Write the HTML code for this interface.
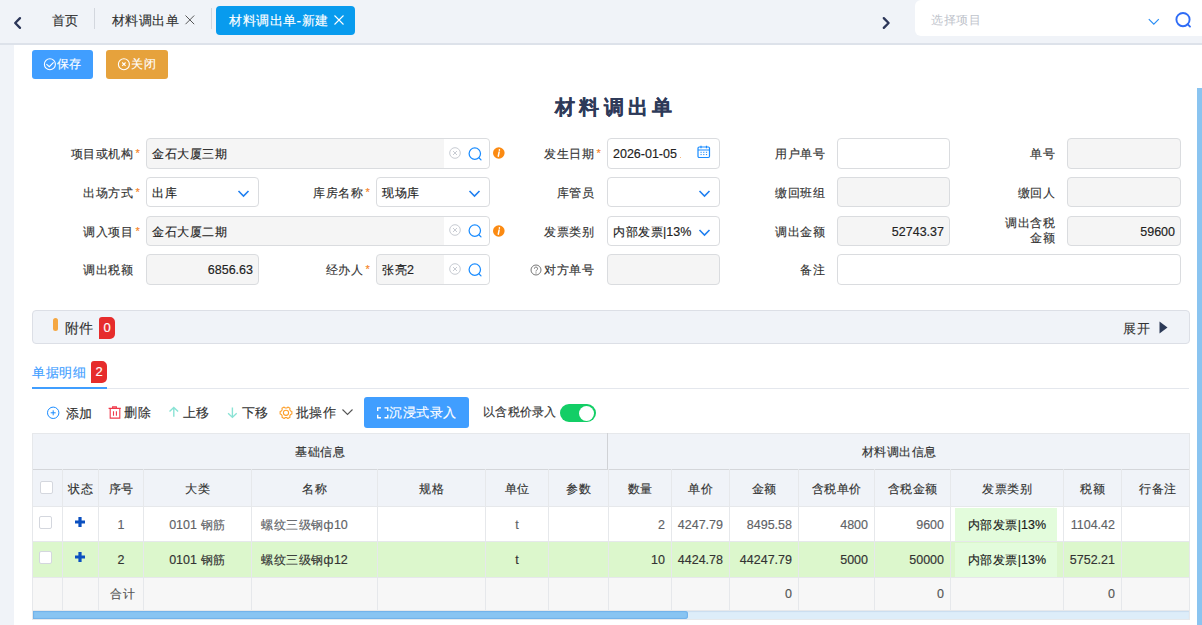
<!DOCTYPE html><html><head><meta charset="utf-8"><style>
*{box-sizing:border-box;margin:0;padding:0}
html,body{width:1202px;height:625px;overflow:hidden}
body{position:relative;background:#f0f3f8;font-family:"Liberation Sans",sans-serif;font-size:13px;color:#333;-webkit-text-stroke-width:.15px}
.a{position:absolute;white-space:nowrap}
svg{position:absolute;overflow:visible}
.c12{font-size:12px;letter-spacing:.5px}
.n{font-size:12.5px;letter-spacing:0}
.lbl{position:absolute;text-align:right;color:#333;padding-top:1px;white-space:nowrap;font-size:12px;letter-spacing:.5px}
.req{position:absolute;color:#f5831f;font-size:11px}
.inp{position:absolute;border:1px solid #dadcdf;border-radius:4px;background:#fff;padding-left:5px;padding-top:1px;color:#222;white-space:nowrap;overflow:hidden;font-size:12px;letter-spacing:.5px}
.gray{background:#f5f5f5}
.r{text-align:right;padding-right:5px}
.cell{position:absolute;text-align:center;white-space:nowrap;color:#333;font-size:12px;letter-spacing:.5px;text-indent:1px}
.vl{position:absolute;width:1px;background:#e6e8eb}
.hl{position:absolute;height:1px;background:#e6e8eb}
</style></head><body>
<div class="a" style="left:0;top:0;width:1202px;height:43px;background:#f0f3f8"></div>
<div class="a" style="left:0;top:43px;width:1202px;height:2px;background:#dde2ea"></div>
<div class="a" style="left:14px;top:45px;width:1188px;height:580px;background:#fff"></div>
<div class="a" style="left:1197px;top:88px;width:5px;height:537px;background:#8ac4f0"></div>
<svg style="left:0;top:0" width="30" height="44"><path d="M20 18.1 L15.2 23 L20 27.9" fill="none" stroke="#2c3659" stroke-width="2.3" stroke-linecap="round" stroke-linejoin="round"/></svg>
<div class="a" style="left:52px;top:9px;line-height:24px;font-size:13px;color:#333">首页</div>
<div class="a" style="left:94px;top:8px;width:1px;height:21px;background:#d3d7de"></div>
<div class="a" style="left:112px;top:9px;line-height:24px;font-size:13px;letter-spacing:.4px;color:#333">材料调出单</div>
<svg style="left:185px;top:15px" width="12" height="12"><path d="M0.5 0.5L9.2 9.2M9.2 0.5L0.5 9.2" stroke="#444" stroke-width="0.9"/></svg>
<div class="a" style="left:211px;top:8px;width:1px;height:21px;background:#d3d7de"></div>
<div class="a" style="left:216px;top:6px;width:139px;height:29px;background:#089bee;border-radius:4px"></div>
<div class="a" style="left:229px;top:9px;line-height:24px;font-size:13px;letter-spacing:.5px;color:#fff">材料调出单<span style="font-size:13.5px">-</span>新建</div>
<svg style="left:334px;top:15px" width="12" height="12"><path d="M0.5 0.5L9.5 9.5M9.5 0.5L0.5 9.5" stroke="#fff" stroke-width="1.1"/></svg>
<svg style="left:876px;top:0" width="20" height="44"><path d="M7.8 18.1 L12.6 23 L7.8 27.9" fill="none" stroke="#2c3659" stroke-width="2.3" stroke-linecap="round" stroke-linejoin="round"/></svg>
<div class="a" style="left:915px;top:0;width:287px;height:36px;background:#fff;border-radius:6px 0 0 6px"></div>
<div class="a c12" style="left:931px;top:8px;line-height:24px;color:#c0c4cc;-webkit-text-stroke-width:0">选择项目</div>
<svg style="left:1146px;top:16px" width="16" height="10"><path d="M2.8 3.2L7.8 8.2L12.8 3.2" fill="none" stroke="#2b8ef5" stroke-width="1.2"/></svg>
<svg style="left:1172px;top:10px" width="22" height="22"><circle cx="11" cy="9.6" r="6.6" fill="none" stroke="#2f6cf6" stroke-width="1.9"/><path d="M15.6 14.2L18 16.6" stroke="#2f6cf6" stroke-width="1.9" stroke-linecap="round"/></svg>
<div class="a" style="left:32px;top:50px;width:61px;height:29px;border-radius:3px;background:#409eff"></div>
<svg style="left:43px;top:58px" width="14" height="14"><circle cx="6.9" cy="6.2" r="5.5" fill="none" stroke="#fff" stroke-width="1.1"/><path d="M3.4 6.2L6.3 8.7L10.6 4.4" fill="none" stroke="#fff" stroke-width="1.1"/></svg>
<div class="a" style="left:57px;top:52px;line-height:24px;font-size:12px;letter-spacing:0.3px;color:#fff">保存</div>
<div class="a" style="left:106px;top:50px;width:62px;height:29px;border-radius:3px;background:#e6a23c"></div>
<svg style="left:117px;top:58px" width="14" height="14"><circle cx="6.9" cy="6.2" r="5.5" fill="none" stroke="#fff" stroke-width="1.1"/><path d="M5.2 4.5L8.6 7.9M8.6 4.5L5.2 7.9" fill="none" stroke="#fff" stroke-width="1.1"/></svg>
<div class="a" style="left:131px;top:52px;line-height:24px;font-size:12px;letter-spacing:1.2px;color:#fff">关闭</div>
<div class="a" style="left:555px;top:92px;font-size:20px;font-weight:bold;letter-spacing:4.3px;color:#2e3a59;line-height:30px">材料调出单</div>
<div class="lbl" style="left:-7px;width:140px;top:138px;height:31px;line-height:31px">项目或机构</div>
<div class="req" style="left:135.5px;top:138px;line-height:31px">*</div>
<div class="inp gray" style="left:146px;top:138px;width:344px;height:31px;line-height:29px">金石大厦三期</div>
<div class="a" style="left:444px;top:139px;width:45px;height:29px;background:#fff;border-radius:0 4px 4px 0"></div>
<svg style="left:449px;top:146.5px" width="14" height="14"><circle cx="6" cy="6" r="5.3" fill="none" stroke="#c8ccd3" stroke-width="1"/><path d="M4 4L8 8M8 4L4 8" stroke="#c8ccd3" stroke-width="1"/></svg>
<svg style="left:467px;top:146.5px" width="16" height="16"><circle cx="7.8" cy="6.6" r="5.7" fill="none" stroke="#1a8cff" stroke-width="1.25"/><path d="M11.9 10.8L14 12.9" stroke="#1a8cff" stroke-width="1.25" stroke-linecap="round"/></svg>
<svg style="left:492px;top:147.0px" width="14" height="14"><circle cx="6.8" cy="6" r="5.8" fill="#fb8a12"/><path d="M7.4 2.8v0.5M7.1 5.1L6.3 9.2" stroke="#fff" stroke-width="1.5" stroke-linecap="round"/></svg>
<div class="lbl" style="left:454px;width:140px;top:138px;height:31px;line-height:31px">发生日期</div>
<div class="req" style="left:596.5px;top:138px;line-height:31px">*</div>
<div class="inp " style="left:607px;top:138px;width:113px;height:31px;line-height:29px"><span class="n">2026-01-05</span></div>
<svg style="left:697px;top:145px" width="14" height="14"><rect x="1" y="2" width="11.5" height="10.5" rx="1.2" fill="none" stroke="#1a8cff" stroke-width="1.2"/><path d="M1 5H12.5M4 0.8v2.4M9.5 0.8v2.4" stroke="#1a8cff" stroke-width="1.2"/><path d="M3.5 7.3h1.2M6.2 7.3h1.2M8.9 7.3h1.2M3.5 9.6h1.2M6.2 9.6h1.2M8.9 9.6h1.2" stroke="#1a8cff" stroke-width="1"/></svg>
<div class="a" style="left:680px;top:156.5px;width:1.3px;height:1.5px;background:#f7b37a"></div>
<div class="lbl" style="left:685px;width:140px;top:138px;height:31px;line-height:31px">用户单号</div>
<div class="inp " style="left:837px;top:138px;width:113px;height:31px;line-height:29px"></div>
<div class="lbl" style="left:915px;width:140px;top:138px;height:31px;line-height:31px">单号</div>
<div class="inp gray" style="left:1067px;top:138px;width:114px;height:31px;line-height:29px"></div>
<div class="lbl" style="left:-7px;width:140px;top:177px;height:30px;line-height:30px">出场方式</div>
<div class="req" style="left:135.5px;top:177px;line-height:30px">*</div>
<div class="inp " style="left:146px;top:177px;width:113px;height:30px;line-height:28px">出库</div>
<svg style="left:237px;top:189.0px" width="14" height="10"><path d="M1.5 2L6.5 7L11.5 2" fill="none" stroke="#1f7ff0" stroke-width="1.6"/></svg>
<div class="lbl" style="left:223px;width:140px;top:177px;height:30px;line-height:30px">库房名称</div>
<div class="req" style="left:365.5px;top:177px;line-height:30px">*</div>
<div class="inp " style="left:376px;top:177px;width:114px;height:30px;line-height:28px">现场库</div>
<svg style="left:468px;top:189.0px" width="14" height="10"><path d="M1.5 2L6.5 7L11.5 2" fill="none" stroke="#1f7ff0" stroke-width="1.6"/></svg>
<div class="lbl" style="left:454px;width:140px;top:177px;height:30px;line-height:30px">库管员</div>
<div class="inp " style="left:607px;top:177px;width:113px;height:30px;line-height:28px"></div>
<svg style="left:698px;top:189.0px" width="14" height="10"><path d="M1.5 2L6.5 7L11.5 2" fill="none" stroke="#1f7ff0" stroke-width="1.6"/></svg>
<div class="lbl" style="left:685px;width:140px;top:177px;height:30px;line-height:30px">缴回班组</div>
<div class="inp gray" style="left:837px;top:177px;width:113px;height:30px;line-height:28px"></div>
<div class="lbl" style="left:915px;width:140px;top:177px;height:30px;line-height:30px">缴回人</div>
<div class="inp gray" style="left:1067px;top:177px;width:114px;height:30px;line-height:28px"></div>
<div class="lbl" style="left:-7px;width:140px;top:216px;height:30px;line-height:30px">调入项目</div>
<div class="req" style="left:135.5px;top:216px;line-height:30px">*</div>
<div class="inp gray" style="left:146px;top:216px;width:344px;height:30px;line-height:28px">金石大厦二期</div>
<div class="a" style="left:444px;top:217px;width:45px;height:28px;background:#fff;border-radius:0 4px 4px 0"></div>
<svg style="left:449px;top:224.0px" width="14" height="14"><circle cx="6" cy="6" r="5.3" fill="none" stroke="#c8ccd3" stroke-width="1"/><path d="M4 4L8 8M8 4L4 8" stroke="#c8ccd3" stroke-width="1"/></svg>
<svg style="left:467px;top:224.0px" width="16" height="16"><circle cx="7.8" cy="6.6" r="5.7" fill="none" stroke="#1a8cff" stroke-width="1.25"/><path d="M11.9 10.8L14 12.9" stroke="#1a8cff" stroke-width="1.25" stroke-linecap="round"/></svg>
<svg style="left:492px;top:224.5px" width="14" height="14"><circle cx="6.8" cy="6" r="5.8" fill="#fb8a12"/><path d="M7.4 2.8v0.5M7.1 5.1L6.3 9.2" stroke="#fff" stroke-width="1.5" stroke-linecap="round"/></svg>
<div class="lbl" style="left:454px;width:140px;top:216px;height:30px;line-height:30px">发票类别</div>
<div class="inp " style="left:607px;top:216px;width:113px;height:30px;line-height:28px">内部发票<span class="n">|13%</span></div>
<svg style="left:698px;top:228.0px" width="14" height="10"><path d="M1.5 2L6.5 7L11.5 2" fill="none" stroke="#1f7ff0" stroke-width="1.6"/></svg>
<div class="lbl" style="left:685px;width:140px;top:216px;height:30px;line-height:30px">调出金额</div>
<div class="inp gray r" style="left:837px;top:216px;width:113px;height:30px;line-height:28px"><span class="n">52743.37</span></div>
<div class="lbl" style="left:915px;width:140px;top:214.5px;line-height:15px;white-space:normal">调出含税<br>金额</div>
<div class="inp gray r" style="left:1067px;top:216px;width:114px;height:30px;line-height:28px"><span class="n">59600</span></div>
<div class="lbl" style="left:-7px;width:140px;top:254px;height:31px;line-height:31px">调出税额</div>
<div class="inp gray r" style="left:146px;top:254px;width:113px;height:31px;line-height:29px"><span class="n">6856.63</span></div>
<div class="lbl" style="left:223px;width:140px;top:254px;height:31px;line-height:31px">经办人</div>
<div class="req" style="left:365.5px;top:254px;line-height:31px">*</div>
<div class="inp gray" style="left:376px;top:254px;width:114px;height:31px;line-height:29px">张亮<span class="n">2</span></div>
<div class="a" style="left:444px;top:255px;width:45px;height:29px;background:#fff;border-radius:0 4px 4px 0"></div>
<svg style="left:449px;top:262.5px" width="14" height="14"><circle cx="6" cy="6" r="5.3" fill="none" stroke="#c8ccd3" stroke-width="1"/><path d="M4 4L8 8M8 4L4 8" stroke="#c8ccd3" stroke-width="1"/></svg>
<svg style="left:467px;top:262.5px" width="16" height="16"><circle cx="7.8" cy="6.6" r="5.7" fill="none" stroke="#1a8cff" stroke-width="1.25"/><path d="M11.9 10.8L14 12.9" stroke="#1a8cff" stroke-width="1.25" stroke-linecap="round"/></svg>
<div class="lbl" style="left:454px;width:140px;top:254px;height:31px;line-height:31px">对方单号</div>
<svg style="left:530px;top:264px" width="13" height="13"><circle cx="6" cy="6" r="5" fill="none" stroke="#777" stroke-width="1"/><path d="M4.4 4.7a1.6 1.6 0 1 1 2.3 1.4c-.5.3-.7.6-.7 1.1v.3" fill="none" stroke="#777" stroke-width="1"/><circle cx="6" cy="8.9" r=".6" fill="#777"/></svg>
<div class="inp gray" style="left:607px;top:254px;width:113px;height:31px;line-height:29px"></div>
<div class="lbl" style="left:685px;width:140px;top:254px;height:31px;line-height:31px">备注</div>
<div class="inp " style="left:837px;top:254px;width:344px;height:31px;line-height:29px"></div>
<div class="a" style="left:32px;top:310px;width:1158px;height:34px;background:#f0f3f8;border:1px solid #dcdfe6;border-radius:4px"></div>
<div class="a" style="left:53px;top:318px;width:5px;height:13px;background:#f5a742;border-radius:3px"></div>
<div class="a" style="left:65px;top:316px;font-size:14px;line-height:24px;color:#333">附件</div>
<div class="a" style="left:99px;top:317px;width:16px;height:22px;background:#e62c2c;border-radius:3px 5px 5px 0;color:#fff;font-size:13px;line-height:22px;text-align:center">0</div>
<div class="a" style="left:1123px;top:317px;font-size:13px;letter-spacing:.6px;line-height:24px;color:#333">展开</div>
<svg style="left:1159px;top:321px" width="10" height="14"><path d="M0.5 0.5L8.5 6.5L0.5 12.5Z" fill="#2c3a57"/></svg>
<div class="a" style="left:32px;top:388px;width:1157px;height:1px;background:#e4e7ed"></div>
<div class="a" style="left:32px;top:387px;width:75px;height:2px;background:#409eff"></div>
<div class="a" style="left:32px;top:361px;font-size:13px;letter-spacing:.6px;line-height:24px;color:#409eff">单据明细</div>
<div class="a" style="left:91px;top:361px;width:16px;height:22px;background:#e62c2c;border-radius:3px 5px 5px 0;color:#fff;font-size:13px;line-height:22px;text-align:center">2</div>
<svg style="left:46px;top:406px" width="14" height="14"><circle cx="7.2" cy="6.8" r="5.7" fill="none" stroke="#1a8cff" stroke-width="1"/><path d="M7.2 4.3v5M4.7 6.8h5" stroke="#1a8cff" stroke-width="1"/></svg>
<div class="a" style="left:66px;top:401.5px;line-height:24px;color:#333">添加</div>
<svg style="left:108px;top:405px" width="14" height="15"><path d="M0.6 3.4H12.8M4.6 3.4V1.9H8.4V3.4" fill="none" stroke="#f0384a" stroke-width="1.1"/><path d="M2.2 3.4V13.1H11.8V3.4" fill="none" stroke="#f0384a" stroke-width="1.1"/><path d="M5.5 6.2V10.8M8.4 6.2V10.8" stroke="#f0384a" stroke-width="1.1"/></svg>
<div class="a" style="left:124px;top:401px;line-height:24px;letter-spacing:.5px;color:#333">删除</div>
<svg style="left:168px;top:405px" width="12" height="15"><path d="M5.8 2.6V11.8M1.5 6.6L5.8 2.5L10.1 6.6" fill="none" stroke="#8ae3d5" stroke-width="1.4"/></svg>
<div class="a" style="left:183px;top:401px;line-height:24px;color:#333">上移</div>
<svg style="left:226px;top:405px" width="12" height="15"><path d="M6.4 2.6V12.2M2.1 8.3L6.4 12.4L10.7 8.3" fill="none" stroke="#8ae3d5" stroke-width="1.4"/></svg>
<div class="a" style="left:242px;top:401px;line-height:24px;color:#333">下移</div>
<svg style="left:279px;top:406px" width="14" height="14"><polygon points="11.57,5.04 12.87,5.55 12.87,8.05 11.57,8.56 10.81,9.88 11.01,11.26 8.85,12.51 7.77,11.64 6.23,11.64 5.15,12.51 2.99,11.26 3.19,9.88 2.43,8.56 1.13,8.05 1.13,5.55 2.43,5.04 3.19,3.72 2.99,2.34 5.15,1.09 6.23,1.96 7.77,1.96 8.85,1.09 11.01,2.34 10.81,3.72" fill="none" stroke="#fd9f2a" stroke-width="1.1" stroke-linejoin="round"/><circle cx="7" cy="6.8" r="2.6" fill="none" stroke="#fd9f2a" stroke-width="1.1"/></svg>
<div class="a" style="left:296px;top:401px;line-height:24px;letter-spacing:.4px;color:#333">批操作</div>
<svg style="left:341px;top:407px" width="14" height="10"><path d="M1.5 2.5L6.5 7.5L11.5 2.5" fill="none" stroke="#555" stroke-width="1.1"/></svg>
<div class="a" style="left:364px;top:397px;width:105px;height:31px;background:#409eff;border-radius:3px"></div>
<svg style="left:375px;top:405px" width="16" height="16"><path d="M2.7 6V2.9H6M9.5 2.9H12.8V6M12.8 9.7V12.8H9.5M6 12.8H2.7V9.7" fill="none" stroke="#fff" stroke-width="1.4"/></svg>
<div class="a" style="left:389px;top:401px;line-height:24px;font-size:13px;letter-spacing:.6px;color:#fff">沉浸式录入</div>
<div class="a" style="left:483px;top:399.5px;line-height:24px;font-size:12px;letter-spacing:.25px;color:#333">以含税价录入</div>
<div class="a" style="left:560px;top:404px;width:36px;height:18px;background:#13ce66;border-radius:9px"></div>
<div class="a" style="left:579.2px;top:405.5px;width:15px;height:15px;background:#fff;border-radius:50%"></div>
<div class="a" style="left:32px;top:433px;width:1157px;height:73px;background:#f0f3f8"></div>
<div class="a" style="left:32px;top:541px;width:1157px;height:36px;background:#dcf7cc"></div>
<div class="a" style="left:32px;top:577px;width:1157px;height:33px;background:#f7f7f7"></div>
<div class="a" style="left:955px;top:508px;width:102px;height:33px;background:#e3fcdc"></div>
<div class="a" style="left:955px;top:543px;width:102px;height:34px;background:#e3fcdc"></div>
<div class="hl" style="left:32px;top:433px;width:1157px;background:#e6e8eb"></div>
<div class="hl" style="left:32px;top:469px;width:1157px;background:#d4d6da"></div>
<div class="hl" style="left:32px;top:506px;width:1157px;background:#e6e8eb"></div>
<div class="hl" style="left:32px;top:541px;width:1157px;background:#e6e8eb"></div>
<div class="hl" style="left:32px;top:577px;width:1157px;background:#e6e8eb"></div>
<div class="hl" style="left:32px;top:610px;width:1157px;background:#e6e8eb"></div>
<div class="vl" style="left:32px;top:433px;height:187px"></div>
<div class="vl" style="left:1189px;top:433px;height:187px"></div>
<div class="hl" style="left:32px;top:619px;width:1158px"></div>
<div class="vl" style="left:607px;top:433px;height:36px;background:#d0d2d6"></div>
<div class="vl" style="left:62px;top:469px;height:141px"></div>
<div class="vl" style="left:98px;top:469px;height:141px"></div>
<div class="vl" style="left:143px;top:469px;height:141px"></div>
<div class="vl" style="left:251px;top:469px;height:141px"></div>
<div class="vl" style="left:377px;top:469px;height:141px"></div>
<div class="vl" style="left:485px;top:469px;height:141px"></div>
<div class="vl" style="left:548px;top:469px;height:141px"></div>
<div class="vl" style="left:608px;top:469px;height:141px"></div>
<div class="vl" style="left:671px;top:469px;height:141px"></div>
<div class="vl" style="left:729px;top:469px;height:141px"></div>
<div class="vl" style="left:798px;top:469px;height:141px"></div>
<div class="vl" style="left:874px;top:469px;height:141px"></div>
<div class="vl" style="left:950px;top:469px;height:141px"></div>
<div class="vl" style="left:1063px;top:469px;height:141px"></div>
<div class="vl" style="left:1121px;top:469px;height:141px"></div>
<div class="cell" style="left:32px;width:575px;top:434px;line-height:36px">基础信息</div>
<div class="cell" style="left:608px;width:581px;top:434px;line-height:36px">材料调出信息</div>
<div class="cell" style="left:62px;width:36px;top:471px;line-height:37px">状态</div>
<div class="cell" style="left:98px;width:45px;top:471px;line-height:37px">序号</div>
<div class="cell" style="left:143px;width:108px;top:471px;line-height:37px">大类</div>
<div class="cell" style="left:251px;width:126px;top:471px;line-height:37px">名称</div>
<div class="cell" style="left:377px;width:108px;top:471px;line-height:37px">规格</div>
<div class="cell" style="left:485px;width:63px;top:471px;line-height:37px">单位</div>
<div class="cell" style="left:548px;width:60px;top:471px;line-height:37px">参数</div>
<div class="cell" style="left:608px;width:63px;top:471px;line-height:37px">数量</div>
<div class="cell" style="left:671px;width:58px;top:471px;line-height:37px">单价</div>
<div class="cell" style="left:729px;width:69px;top:471px;line-height:37px">金额</div>
<div class="cell" style="left:798px;width:76px;top:471px;line-height:37px">含税单价</div>
<div class="cell" style="left:874px;width:76px;top:471px;line-height:37px">含税金额</div>
<div class="cell" style="left:950px;width:113px;top:471px;line-height:37px">发票类别</div>
<div class="cell" style="left:1063px;width:58px;top:471px;line-height:37px">税额</div>
<div class="cell" style="left:1121px;width:73px;top:471px;line-height:37px">行备注</div>
<div class="a" style="left:40px;top:481px;width:13px;height:13px;background:#fff;border:1px solid #d4d7de;border-radius:2px"></div>
<div class="a" style="left:39px;top:516px;width:13px;height:13px;background:#fff;border:1px solid #d4d7de;border-radius:2px"></div>
<svg style="left:74px;top:516px" width="12" height="12"><path d="M6 1V11M1 6H11" stroke="#0b50c0" stroke-width="3.2"/></svg>
<div class="cell" style="left:98px;width:45px;top:508px;line-height:35px;color:#606266"><span class="n">1</span></div>
<div class="cell" style="left:143px;width:108px;top:508px;line-height:35px;color:#606266"><span class="n">0101</span> 钢筋</div>
<div class="cell" style="left:260px;top:508px;line-height:35px;text-align:left;color:#606266">螺纹三级钢ф<span class="n">10</span></div>
<div class="cell" style="left:485px;width:63px;top:508px;line-height:35px;color:#606266"><span class="n">t</span></div>
<div class="cell" style="left:608px;width:57px;top:508px;line-height:35px;text-align:right;color:#606266"><span class="n">2</span></div>
<div class="cell" style="left:671px;width:52px;top:508px;line-height:35px;text-align:right;color:#606266"><span class="n">4247.79</span></div>
<div class="cell" style="left:729px;width:63px;top:508px;line-height:35px;text-align:right;color:#606266"><span class="n">8495.58</span></div>
<div class="cell" style="left:798px;width:70px;top:508px;line-height:35px;text-align:right;color:#606266"><span class="n">4800</span></div>
<div class="cell" style="left:874px;width:70px;top:508px;line-height:35px;text-align:right;color:#606266"><span class="n">9600</span></div>
<div class="cell" style="left:950px;width:113px;top:508px;line-height:35px;color:#1a1a1a">内部发票<span class="n">|13%</span></div>
<div class="cell" style="left:1063px;width:52px;top:508px;line-height:35px;text-align:right;color:#606266"><span class="n">1104.42</span></div>
<div class="a" style="left:39px;top:551px;width:13px;height:13px;background:#fff;border:1px solid #d4d7de;border-radius:2px"></div>
<svg style="left:74px;top:551px" width="12" height="12"><path d="M6 1V11M1 6H11" stroke="#0b50c0" stroke-width="3.2"/></svg>
<div class="cell" style="left:98px;width:45px;top:542px;line-height:36px;color:#333"><span class="n">2</span></div>
<div class="cell" style="left:143px;width:108px;top:542px;line-height:36px;color:#333"><span class="n">0101</span> 钢筋</div>
<div class="cell" style="left:260px;top:542px;line-height:36px;text-align:left;color:#333">螺纹三级钢ф<span class="n">12</span></div>
<div class="cell" style="left:485px;width:63px;top:542px;line-height:36px;color:#333"><span class="n">t</span></div>
<div class="cell" style="left:608px;width:57px;top:542px;line-height:36px;text-align:right;color:#333"><span class="n">10</span></div>
<div class="cell" style="left:671px;width:52px;top:542px;line-height:36px;text-align:right;color:#333"><span class="n">4424.78</span></div>
<div class="cell" style="left:729px;width:63px;top:542px;line-height:36px;text-align:right;color:#333"><span class="n">44247.79</span></div>
<div class="cell" style="left:798px;width:70px;top:542px;line-height:36px;text-align:right;color:#333"><span class="n">5000</span></div>
<div class="cell" style="left:874px;width:70px;top:542px;line-height:36px;text-align:right;color:#333"><span class="n">50000</span></div>
<div class="cell" style="left:950px;width:113px;top:542px;line-height:36px;color:#1a1a1a">内部发票<span class="n">|13%</span></div>
<div class="cell" style="left:1063px;width:52px;top:542px;line-height:36px;text-align:right;color:#333"><span class="n">5752.21</span></div>
<div class="cell" style="left:99.5px;width:45px;top:578px;line-height:33px;color:#555">合计</div>
<div class="cell" style="left:729px;width:63px;top:578px;line-height:33px;text-align:right;color:#555"><span class="n">0</span></div>
<div class="cell" style="left:874px;width:70px;top:578px;line-height:33px;text-align:right;color:#555"><span class="n">0</span></div>
<div class="cell" style="left:1063px;width:52px;top:578px;line-height:33px;text-align:right;color:#555"><span class="n">0</span></div>
<div class="a" style="left:33px;top:611px;width:1156px;height:8px;background:#ddedf9;box-shadow:inset 0 1px 1px #c9dcef"></div>
<div class="a" style="left:33px;top:611px;width:655px;height:8px;background:#88c4f2;border-radius:0 3px 3px 0;box-shadow:inset 0 0 1px 1px #72b2ea"></div>
</body></html>
